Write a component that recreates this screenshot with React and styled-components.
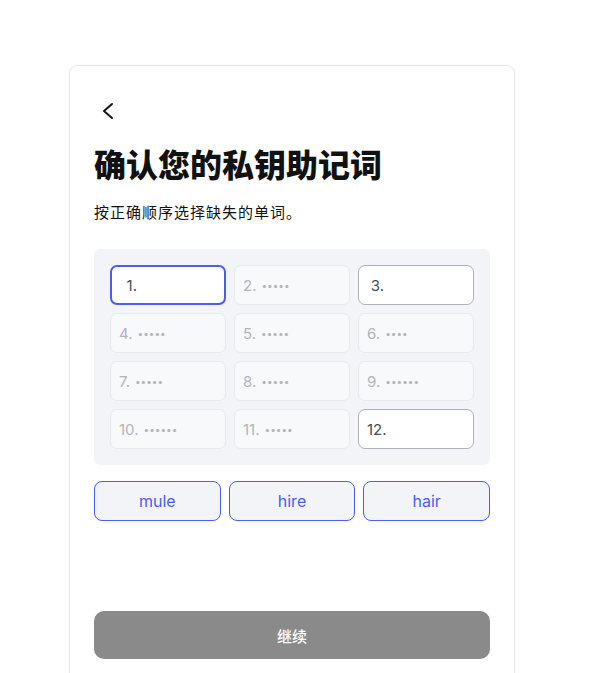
import React from "react";
import styled, { createGlobalStyle } from "styled-components";

const GlobalStyle = createGlobalStyle`
  html, body {
    margin: 0;
    padding: 0;
    background: #ffffff;
    font-family: Inter, "Noto Sans CJK SC", "Noto Sans", sans-serif;
    color: #111111;
  }
`;

const Page = styled.div`
  padding: 65px 0 0 69px;
  height: 608px;
  overflow: hidden;
`;

const Card = styled.div`
  width: 446px;
  box-sizing: border-box;
  border: 1px solid #e4e5ea;
  border-radius: 8px;
  padding: 25px 24px 40px;
  display: flex;
  flex-direction: column;
`;

const BackRow = styled.div`
  height: 40px;
  display: flex;
  align-items: center;
`;

const BackButton = styled.button`
  width: 28px;
  height: 28px;
  padding: 0;
  border: none;
  background: none;
  display: flex;
  align-items: center;
  justify-content: center;
  cursor: pointer;
`;

const Title = styled.h1`
  margin: 15px 0 0;
  font-size: 32px;
  line-height: 40px;
  font-weight: 800;
  color: #111111;
`;

const Subtitle = styled.p`
  margin: 15px 0 0;
  font-size: 15px;
  line-height: 24px;
  letter-spacing: 1px;
  color: #111111;
`;

const Panel = styled.div`
  margin-top: 24px;
  background: #f3f4f8;
  border-radius: 6px;
  padding: 16px;
  display: grid;
  grid-template-columns: repeat(3, 1fr);
  gap: 8px;
`;

const Cell = styled.div`
  height: 40px;
  box-sizing: border-box;
  border-radius: 7px;
  display: flex;
  align-items: center;
  font-size: 15px;
  border: ${(p) =>
    p.$state === "active"
      ? "2px solid #4b5cf3"
      : p.$state === "empty"
      ? "1px solid #adafbf"
      : "1px solid #e8e9ee"};
  background: ${(p) => (p.$state === "filled" ? "#f8f9fb" : "#ffffff")};
  color: ${(p) => (p.$state === "filled" ? "#b2b4bd" : "#4a4b55")};
  padding-left: 8px;
`;

const Num = styled.span`
  display: inline-block;
  min-width: ${(p) => (p.$editable ? "17px" : "0")};
  text-align: ${(p) => (p.$editable ? "right" : "left")};
`;

const Dots = styled.span`
  margin-left: 5px;
  font-size: 10px;
  letter-spacing: 0px;
  color: #b2b4bd;
`;

const Words = styled.div`
  margin-top: 16px;
  display: grid;
  grid-template-columns: repeat(3, 1fr);
  gap: 8px;
`;

const WordButton = styled.button`
  height: 40px;
  border: 1px solid #4b5cf3;
  border-radius: 8px;
  background: #f3f4f8;
  color: #4b5cf3;
  font-family: Inter, "Noto Sans CJK SC", sans-serif;
  font-size: 16px;
  cursor: pointer;
`;

const Spacer = styled.div`
  height: 90px;
`;

const Continue = styled.button`
  height: 48px;
  border: none;
  border-radius: 10px;
  background: #898a89;
  color: #ffffff;
  font-family: Inter, "Noto Sans CJK SC", sans-serif;
  font-size: 15px;
  font-weight: 500;
`;

const cells = [
  { n: 1, state: "active" },
  { n: 2, dots: 5 },
  { n: 3, state: "empty" },
  { n: 4, dots: 5 },
  { n: 5, dots: 5 },
  { n: 6, dots: 4 },
  { n: 7, dots: 5 },
  { n: 8, dots: 5 },
  { n: 9, dots: 6 },
  { n: 10, dots: 6 },
  { n: 11, dots: 5 },
  { n: 12, state: "empty" },
];

const words = ["mule", "hire", "hair"];

export default function App() {
  return (
    <Page>
      <GlobalStyle />
      <Card>
        <BackRow>
          <BackButton aria-label="back">
            <svg width="28" height="28" viewBox="0 0 28 28" fill="none">
              <path
                d="M18 7 L10 14 L18 21"
                stroke="#111"
                strokeWidth="2"
                strokeLinecap="round"
                strokeLinejoin="round"
              />
            </svg>
          </BackButton>
        </BackRow>
        <Title>确认您的私钥助记词</Title>
        <Subtitle>按正确顺序选择缺失的单词。</Subtitle>
        <Panel>
          {cells.map((c) => {
            const state = c.state || "filled";
            const editable = state !== "filled";
            return (
              <Cell key={c.n} $state={state}>
                <Num $editable={editable}>{c.n}.</Num>
                {c.dots && <Dots>{"•".repeat(c.dots)}</Dots>}
              </Cell>
            );
          })}
        </Panel>
        <Words>
          {words.map((w) => (
            <WordButton key={w}>{w}</WordButton>
          ))}
        </Words>
        <Spacer />
        <Continue>继续</Continue>
      </Card>
    </Page>
  );
}
